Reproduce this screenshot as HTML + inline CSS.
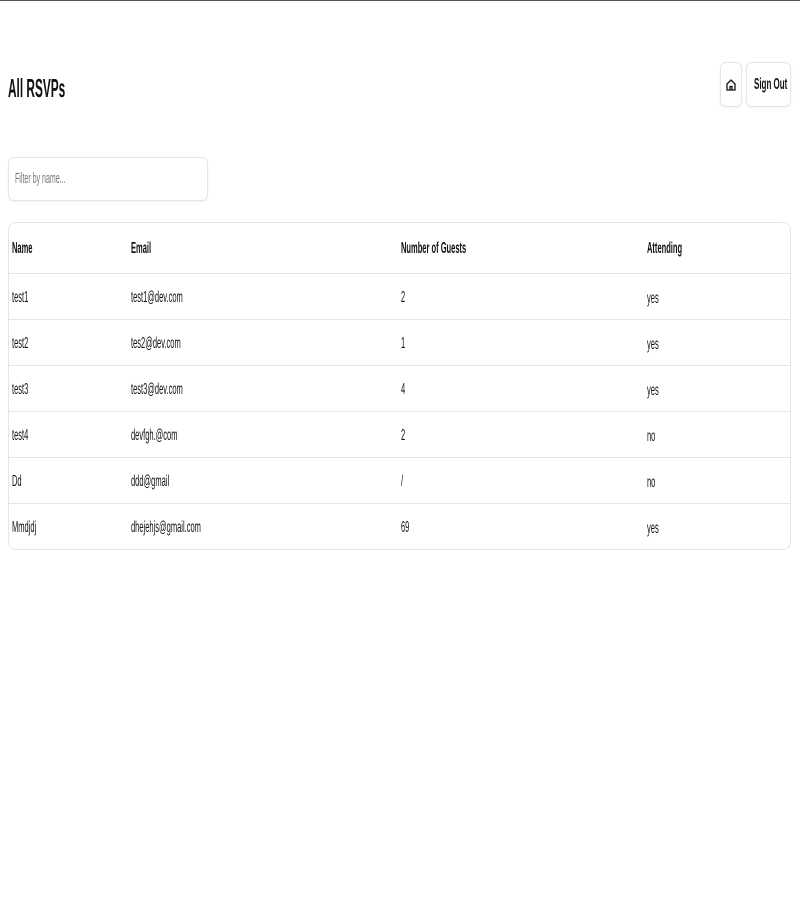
<!DOCTYPE html>
<html><head><style>
html,body{margin:0;padding:0;background:#fff;width:800px;height:915px;overflow:hidden;font-family:"Liberation Sans",sans-serif;color:#111}
body{border-top:1px solid #555;box-sizing:border-box;position:relative}
.t{position:absolute;white-space:nowrap;transform:scaleX(.47);transform-origin:0 50%;font-size:16px;line-height:18px}
.b{font-weight:bold}
.box{position:absolute;border:1px solid #e5e5e5;border-radius:6px;box-sizing:border-box;background:#fff}
.line{position:absolute;left:9px;width:781px;height:1px;background:#e5e5e5}
</style></head><body>
<div class="t b" style="left:8px;top:72px;font-size:26px;line-height:30px;transform:scaleX(.455)">All RSVPs</div>
<div class="box" style="left:720px;top:61px;width:22px;height:45px;box-shadow:0 1px 2px rgba(0,0,0,.05)">
<svg width="10" height="12" viewBox="0 0 10 12" style="position:absolute;left:5px;top:16px" fill="none" stroke="#111" stroke-width="1.3"><path d="M1 5L5 1L9 5V11H1Z"/><path d="M4 11V7.5H6V11"/></svg></div>
<div class="box" style="left:746px;top:61px;width:45px;height:45px;box-shadow:0 1px 2px rgba(0,0,0,.05)"><span class="t b" style="left:7px;top:13px;transform:scaleX(.5)">Sign Out</span></div>
<div class="box" style="left:8px;top:156px;width:200px;height:44px;box-shadow:0 1px 2px rgba(0,0,0,.05)"><span class="t" style="left:6px;top:12px;color:#777;font-size:15px">Filter by name...</span></div>
<div class="box" style="left:8px;top:221px;width:783px;height:328px;border-radius:8px"></div>
<div class="t b" style="left:12px;top:239px">Name</div>
<div class="t b" style="left:131px;top:239px">Email</div>
<div class="t b" style="left:401px;top:239px">Number of Guests</div>
<div class="t b" style="left:647px;top:239px">Attending</div>
<div class="line" style="top:272px"></div>
<div class="line" style="top:318px"></div>
<div class="line" style="top:364px"></div>
<div class="line" style="top:410px"></div>
<div class="line" style="top:456px"></div>
<div class="line" style="top:502px"></div>

<div class="t" style="left:12px;top:288px">test1</div><div class="t" style="left:131px;top:288px">test1@dev.com</div><div class="t" style="left:401px;top:288px">2</div><div class="t" style="left:647px;top:289px">yes</div>
<div class="t" style="left:12px;top:334px">test2</div><div class="t" style="left:131px;top:334px">tes2@dev.com</div><div class="t" style="left:401px;top:334px">1</div><div class="t" style="left:647px;top:335px">yes</div>
<div class="t" style="left:12px;top:380px">test3</div><div class="t" style="left:131px;top:380px">test3@dev.com</div><div class="t" style="left:401px;top:380px">4</div><div class="t" style="left:647px;top:381px">yes</div>
<div class="t" style="left:12px;top:426px">test4</div><div class="t" style="left:131px;top:426px">devfgh.@com</div><div class="t" style="left:401px;top:426px">2</div><div class="t" style="left:647px;top:427px">no</div>
<div class="t" style="left:12px;top:472px">Dd</div><div class="t" style="left:131px;top:472px">ddd@gmail</div><div class="t" style="left:401px;top:472px">/</div><div class="t" style="left:647px;top:473px">no</div>
<div class="t" style="left:12px;top:518px">Mmdjdj</div><div class="t" style="left:131px;top:518px">dhejehjs@gmail.com</div><div class="t" style="left:401px;top:518px">69</div><div class="t" style="left:647px;top:519px">yes</div>
</body></html>
